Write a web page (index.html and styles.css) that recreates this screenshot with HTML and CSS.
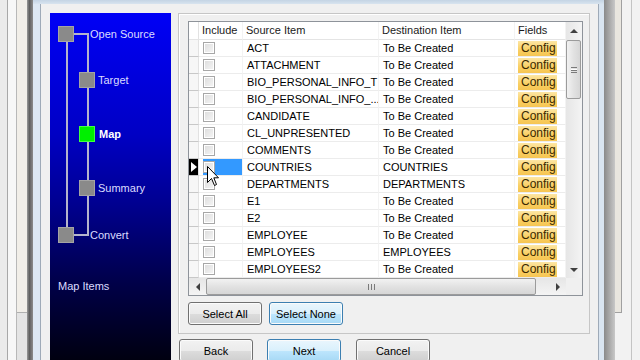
FILE: index.html
```html
<!DOCTYPE html>
<html lang="en">
<head>
    <meta charset="UTF-8">
    <title>Migration Wizard - Map</title>
    <link rel="stylesheet" href="styles.css">
</head>
<body>
    <div class="screen">
        <!-- window behind the dialog -->
        <div class="bg-left">
            <div class="bg-strip one"></div>
            <div class="bg-strip two"></div>
            <div class="bg-strip three"></div>
        </div>
        <div class="shadow-left"></div>

        <div class="dialog">
            <div class="frame-top"></div>
            <div class="dialog-row">
                <div class="frame-left"></div>
                <div class="client">

                    <!-- Wizard steps -->
                    <div class="wizard-nav">
                        <svg class="steps" width="121" height="300" viewBox="0 0 121 300">
                            <g stroke="#b4b4cc" stroke-width="2" fill="none">
                                <line x1="17" y1="29" x2="17" y2="214"/>
                                <polyline points="24,21 38,21 38,222 24,222"/>
                            </g>
                            <g fill="#8a8a8a" stroke="#a4a4a4" stroke-width="1">
                                <rect x="8.5" y="13.5" width="15" height="15"/>
                                <rect x="29.5" y="59.5" width="15" height="15"/>
                                <rect x="29.5" y="167.5" width="15" height="15"/>
                                <rect x="8.5" y="214.5" width="15" height="15"/>
                            </g>
                            <rect x="29.5" y="113.5" width="15" height="15" fill="#00f000" stroke="#40ff40"/>
                            <g class="step-label">
                                <text x="40" y="25">Open Source</text>
                                <text x="48" y="71">Target</text>
                                <text x="49" y="125" class="current">Map</text>
                                <text x="48" y="179">Summary</text>
                                <text x="40" y="226">Convert</text>
                                <text x="8" y="277">Map Items</text>
                            </g>
                        </svg>
                    </div>

                    <div class="main">
                        <div class="panel">
                            <div class="grid">
                                <div class="grid-main">
                                    <div class="table">
                                        <div class="row head">
                                            <div class="cell rh"></div>
                                            <div class="cell">Include</div>
                                            <div class="cell">Source Item</div>
                                            <div class="cell">Destination Item</div>
                                            <div class="cell">Fields</div>
                                        </div>
                                        <div id="rows"></div>
                                    </div>
                                    <div class="vscroll">
                                        <div class="sb-btn"><span class="arrow up"></span></div>
                                        <div class="vtrack">
                                            <div class="vthumb"><span class="grip-h"></span></div>
                                        </div>
                                        <div class="sb-btn"><span class="arrow down"></span></div>
                                    </div>
                                </div>
                                <div class="hscroll">
                                    <div class="sb-btn"><span class="arrow left"></span></div>
                                    <div class="hthumb"><span class="grip-v"></span></div>
                                    <div class="htrack"></div>
                                    <div class="sb-btn"><span class="arrow right"></span></div>
                                    <div class="corner"></div>
                                </div>
                            </div>
                            <div class="panel-buttons">
                                <button class="btn">Select All</button>
                                <button class="btn hot">Select None</button>
                            </div>
                        </div>
                        <div class="nav-buttons">
                            <button class="btn">Back</button>
                            <button class="btn hot">Next</button>
                            <button class="btn">Cancel</button>
                        </div>
                    </div>

                </div>
                <div class="frame-right"></div>
            </div>
        </div>

        <div class="shadow-right"></div>
        <div class="bg-right">
            <div class="bg-strip four"></div>
            <div class="bg-strip five"></div>
        </div>
    </div>

    <!-- mouse pointer -->
    <svg class="pointer" width="13" height="21" viewBox="0 0 13 21">
        <path d="M0.5 0.5 L0.5 16.5 L4.5 12.5 L7.5 19.5 L9.5 18.5 L6.8 11.8 L11.5 11.8 Z" fill="#fff" stroke="#000" stroke-width="1"/>
    </svg>

    <script>
        const items = [
            ['ACT', 'To Be Created'],
            ['ATTACHMENT', 'To Be Created'],
            ['BIO_PERSONAL_INFO_T', 'To Be Created'],
            ['BIO_PERSONAL_INFO_...', 'To Be Created'],
            ['CANDIDATE', 'To Be Created'],
            ['CL_UNPRESENTED', 'To Be Created'],
            ['COMMENTS', 'To Be Created'],
            ['COUNTRIES', 'COUNTRIES'],
            ['DEPARTMENTS', 'DEPARTMENTS'],
            ['E1', 'To Be Created'],
            ['E2', 'To Be Created'],
            ['EMPLOYEE', 'To Be Created'],
            ['EMPLOYEES', 'EMPLOYEES'],
            ['EMPLOYEES2', 'To Be Created']
        ];
        const selected = 7;

        const rows = document.getElementById('rows');
        rows.innerHTML = items.map((item, i) => `
            <div class="row${i === selected ? ' current' : ''}">
                <div class="cell rh">${i === selected ? '<span class="row-arrow"></span>' : ''}</div>
                <div class="cell include"><span class="check"></span></div>
                <div class="cell">${item[0]}</div>
                <div class="cell">${item[1]}</div>
                <div class="cell fields"><span class="config">Config</span></div>
            </div>
        `).join('');
    </script>
</body>
</html>
```

FILE: styles.css
```css
* {
    box-sizing: border-box;
}

body {
    margin: 0;
    width: 640px;
    height: 360px;
    overflow: hidden;
    font-family: 'Liberation Sans', Arial, sans-serif;
    font-size: 11px;
    background-color: #ececec;
}

.screen {
    display: flex;
    height: 360px;
}

/* background windows */
.bg-left {
    width: 27px;
    display: flex;
    background-color: #e4e4e4;
}

.bg-strip.one {
    width: 8px;
    background-color: #ebebeb;
    border-right: 1px solid #a8a8a8;
}

.bg-strip.two {
    width: 9px;
    background-color: #f7f7f7;
    border-right: 1px solid #b8b8b8;
}

.bg-strip.three {
    width: 10px;
    height: 313px;
    background-color: #f1eee8;
    border-bottom: 1px solid #b0b0b0;
}

.shadow-left {
    width: 6px;
    background: linear-gradient(to right, #9a9a9a, #5e5e5e 40%, #8c8c8c);
}

.bg-right {
    width: 25px;
    display: flex;
    background-color: #f2f2f2;
}

.bg-strip.four {
    width: 7px;
    height: 313px;
    background-color: #e9e6df;
    border-right: 1px solid #a0a0a0;
    border-bottom: 1px solid #a0a0a0;
}

.bg-strip.five {
    width: 10px;
    border-right: 1px solid #c4c4c4;
}

.shadow-right {
    width: 11px;
    background: linear-gradient(to right, #8a8a8a, #c8c8c8);
}

/* dialog */
.dialog {
    width: 571px;
    display: flex;
    flex-direction: column;
}

.frame-top {
    height: 4px;
    flex-shrink: 0;
    background: linear-gradient(#c4d4e4, #d8e4ef);
}

.dialog-row {
    display: flex;
    flex: 1;
    min-height: 0;
}

.frame-left {
    width: 8px;
    background-color: #dde8f3;
    border-right: 1px solid #9eaab8;
}

.frame-right {
    width: 6px;
    background-color: #d9e5f1;
    border-left: 1px solid #9eaab8;
}

.client {
    width: 557px;
    display: flex;
    gap: 7px;
    padding: 9px 0 0 9px;
    background-color: #f0f0f0;
    overflow: hidden;
}

/* wizard steps panel */
.wizard-nav {
    width: 121px;
    height: 347px;
    flex-shrink: 0;
    background: linear-gradient(#0000f6 0%, #0000c4 35%, #000090 55%, #000048 78%, #000010 100%);
}

.steps {
    display: block;
}

.step-label text {
    font-family: 'Liberation Sans', Arial, sans-serif;
    font-size: 11px;
    fill: #dcdcff;
}

.step-label text.current {
    font-weight: bold;
    fill: #ffffff;
}

/* right side */
.main {
    display: flex;
    flex-direction: column;
    flex-shrink: 0;
}

.panel {
    width: 412px;
    height: 321px;
    flex-shrink: 0;
    padding: 7px 6px 8px 9px;
    border: 1px solid #c6c6c6;
    box-shadow: inset 1px 1px 0 #ffffff;
}

.grid {
    width: 395px;
    height: 275px;
    border: 1px solid #8e939a;
    background-color: #ffffff;
    display: flex;
    flex-direction: column;
}

.grid-main {
    display: flex;
    height: 256px;
}

.table {
    width: 377px;
}

.row {
    display: grid;
    grid-template-columns: 10px 44px 136px 136px 51px;
    height: 17px;
}

.row.head {
    height: 18px;
}

.cell {
    padding-left: 4px;
    line-height: 16px;
    white-space: nowrap;
    overflow: hidden;
    color: #000;
    border-bottom: 1px solid #ececec;
    border-right: 1px solid #f3f3f3;
}

.head .cell {
    line-height: 17px;
    padding-left: 3px;
    border-bottom: 1px solid #e4e4e4;
    color: #1a1a1a;
}

.cell.rh {
    padding: 0;
    background-color: #f7f7f7;
    border-right: 1px solid #e2e2e2;
    border-bottom: 1px solid #c8c8c8;
}

.head .cell.rh {
    background-color: #ffffff;
    border-bottom: 1px solid #e4e4e4;
}

.current .cell.rh {
    background-color: #000;
    display: flex;
    align-items: center;
    justify-content: center;
}

.row-arrow {
    width: 0;
    height: 0;
    border-top: 5px solid transparent;
    border-bottom: 5px solid transparent;
    border-left: 6px solid #ffffff;
}

.cell.include {
    padding-left: 4px;
    padding-top: 2px;
}

.current .cell.include {
    background: linear-gradient(to right, #ffffff 4px, #3399ff 4px);
}

.check {
    display: block;
    width: 12px;
    height: 12px;
    border: 1px solid #a7a7a7;
    background: linear-gradient(135deg, #dcdcdc, #f6f6f6);
    box-shadow: inset 0 0 0 1px #ffffff;
}

.cell.fields {
    padding: 1px 0 0 3px;
}

.config {
    display: block;
    width: 39px;
    height: 15px;
    padding-left: 3px;
    font-size: 12px;
    line-height: 15px;
    color: #3a2900;
    background: linear-gradient(#fde6a4, #f9cf63 60%, #f6c552);
}

/* scrollbars */
.vscroll {
    width: 16px;
    display: flex;
    flex-direction: column;
    background: linear-gradient(to right, #e6e6e6, #f4f4f4);
}

.sb-btn {
    width: 17px;
    height: 17px;
    flex-shrink: 0;
    display: flex;
    align-items: center;
    justify-content: center;
}

.vscroll .sb-btn {
    width: 16px;
}

.vtrack {
    flex: 1;
    padding-top: 1px;
}

.vthumb {
    width: 15px;
    height: 59px;
    border: 1px solid #9b9b9b;
    border-radius: 2px;
    background: linear-gradient(to right, #f2f2f2, #e2e2e2 50%, #d6d6d6);
    display: flex;
    align-items: center;
    justify-content: center;
}

.grip-h {
    width: 6px;
    height: 6px;
    border-top: 1px solid #7a7a7a;
    border-bottom: 1px solid #7a7a7a;
    background: linear-gradient(#ffffff 1px, #7a7a7a 1px, #7a7a7a 2px, transparent 2px);
    background-position: 0 1px;
    background-repeat: no-repeat;
}

.hscroll {
    height: 17px;
    display: flex;
    background: linear-gradient(#e6e6e6, #f4f4f4);
}

.hthumb {
    width: 330px;
    height: 17px;
    border: 1px solid #9b9b9b;
    border-radius: 2px;
    background: linear-gradient(#f2f2f2, #e2e2e2 50%, #d6d6d6);
    display: flex;
    align-items: center;
    justify-content: center;
}

.grip-v {
    width: 7px;
    height: 6px;
    border-left: 1px solid #7a7a7a;
    border-right: 1px solid #7a7a7a;
    background: linear-gradient(to right, transparent 2px, #7a7a7a 2px, #7a7a7a 3px, transparent 3px);
}

.htrack {
    width: 13px;
}

.corner {
    width: 16px;
    background-color: #f0f0f0;
}

.arrow {
    width: 0;
    height: 0;
}

.arrow.up {
    border-left: 4px solid transparent;
    border-right: 4px solid transparent;
    border-bottom: 4px solid #404040;
}

.arrow.down {
    border-left: 4px solid transparent;
    border-right: 4px solid transparent;
    border-top: 4px solid #404040;
}

.arrow.left {
    border-top: 4px solid transparent;
    border-bottom: 4px solid transparent;
    border-right: 4px solid #404040;
}

.arrow.right {
    border-top: 4px solid transparent;
    border-bottom: 4px solid transparent;
    border-left: 4px solid #404040;
}

/* buttons */
.panel-buttons {
    display: flex;
    gap: 7px;
    margin-top: 6px;
}

.nav-buttons {
    display: flex;
    gap: 14px;
    margin-top: 5px;
    padding-left: 1px;
    flex-shrink: 0;
}

.btn {
    width: 74px;
    height: 23px;
    flex-shrink: 0;
    padding: 0;
    font-family: 'Liberation Sans', Arial, sans-serif;
    font-size: 11px;
    color: #000;
    border: 1px solid #707070;
    border-radius: 3px;
    background: linear-gradient(#f2f2f2 0%, #ebebeb 50%, #dddddd 50%, #cfcfcf 100%);
    box-shadow: inset 0 0 0 1px #fbfbfb;
}

.btn.hot {
    border-color: #3c7fb1;
    background: linear-gradient(#eaf6fd 0%, #d9f0fc 50%, #bee6fd 50%, #a7d9f5 100%);
}

.nav-buttons .btn:last-child {
    margin-left: 1px;
}

/* mouse pointer over the grid */
.pointer {
    position: absolute;
    left: 207px;
    top: 166px;
}
```
